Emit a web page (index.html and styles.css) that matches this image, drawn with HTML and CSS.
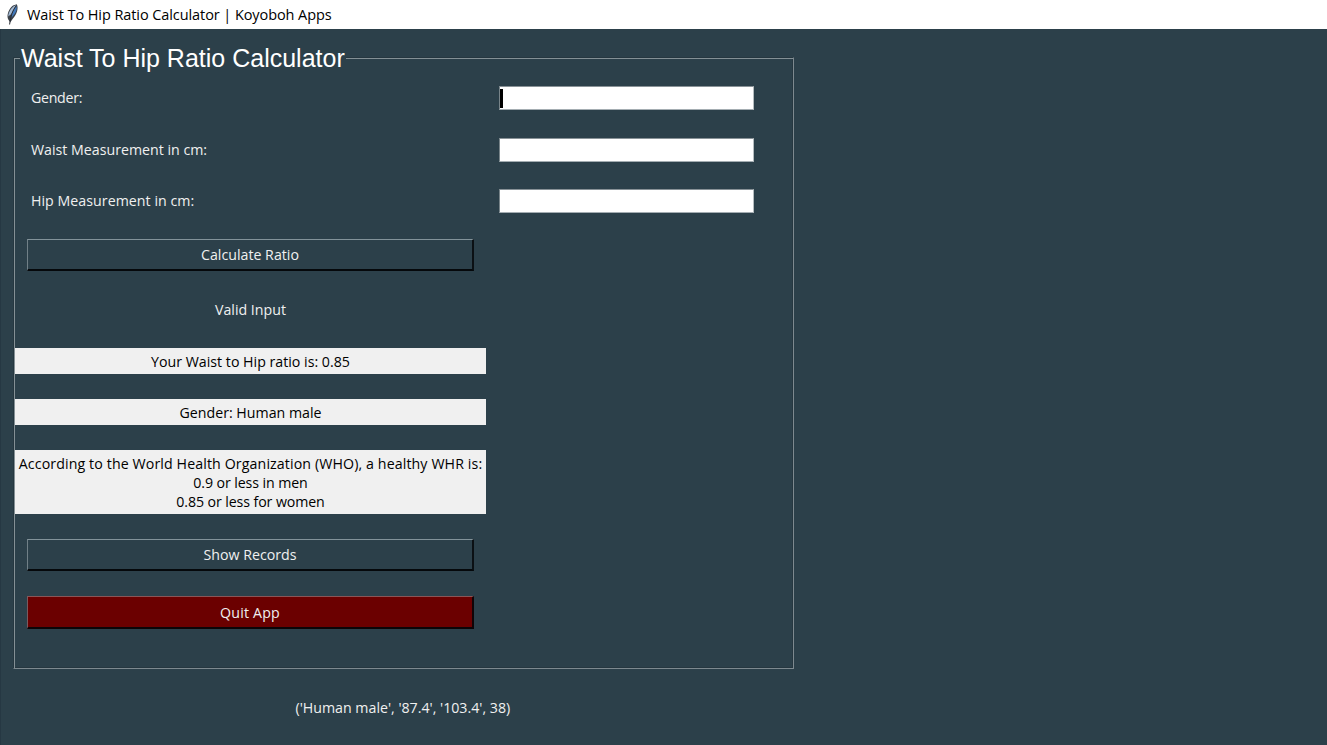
FILE: index.html
```html
<!DOCTYPE html>
<html lang="en">
<head>
<meta charset="utf-8">
<title>Waist To Hip Ratio Calculator | Koyoboh Apps</title>
<link rel="stylesheet" href="styles.css">
</head>
<body>
<header class="titlebar">
  <svg class="feather" width="14" height="22" viewBox="0 0 14 22">
    <path d="M11.8 1.2C13.6 4.5 12.4 11 7.6 16L5.2 19.6L3 16C1.4 12 4 5.5 8 2.6Z" fill="#3a4048"/>
    <path d="M11 2.3C7.5 3.2 3.6 8 3.2 13.4L6 11.2Z" fill="#a4bad4"/>
    <path d="M11.4 3C12.6 6.5 10.3 11.5 6 14.8L7.3 8.5Z" fill="#4178ba"/>
    <path d="M10.8 3.2C8 7 5.6 13 4.6 21.5" fill="none" stroke="#282c33" stroke-width="1"/>
  </svg>
  <span class="title">Waist To Hip Ratio Calculator | Koyoboh Apps</span>
</header>
<main class="window">
  <section class="panel">
    <h1 class="legend">Waist To Hip Ratio Calculator</h1>
    <form class="fields">
      <label class="label t-gender">Gender:</label>
      <div class="entry"><i class="caret"></i></div>
      <label class="label">Waist Measurement in cm:</label>
      <div class="entry"></div>
      <label class="label t-hip">Hip Measurement in cm:</label>
      <div class="entry"></div>
    </form>
    <div class="results">
      <button class="button" type="button">Calculate Ratio</button>
      <div class="status">Valid Input</div>
      <div class="output">Your Waist to Hip ratio is: 0.85</div>
      <div class="output">Gender: Human male</div>
      <div class="output info"><span class="t-who">According to the World Health Organization (WHO), a healthy WHR is:</span><span class="t-limit">0.9 or less in men</span><span class="t-limit">0.85 or less for women</span></div>
      <button class="button" type="button">Show Records</button>
      <button class="button quit" type="button">Quit App</button>
    </div>
  </section>
  <p class="record">('Human male', '87.4', '103.4', 38)</p>
</main>
</body>
</html>
```
FILE: styles.css
```css
* { box-sizing: border-box; }
body {
  margin: 0;
  height: 745px;
  overflow: hidden;
  background: #2c404a;
  color: #f0f0f0;
  font: 14.2px/19px "Open Sans", "Noto Sans", sans-serif;
  white-space: nowrap;
}
.titlebar {
  display: flex;
  align-items: center;
  height: 29px;
  padding-left: 5px;
  background: #fff;
  color: #000;
}
.feather { margin: -2px 8px 0 0; }
.title { font-size: 14.5px; letter-spacing: -0.08px; }
.window {
  display: flex;
  flex-direction: column;
  align-items: flex-start;
  height: 716px;
  padding: 28px 0 0 12px;
  border-left: 1px solid #263843;
}
.panel {
  width: 781px;
  height: 612px;
  padding-left: 1px;
  border: 1px solid;
  border-color: #263740 #7d898f #7d898f #263740;
  box-shadow: inset 1px 1px #849095, inset -1px -1px #263740;
}
.legend {
  width: 326px;
  height: 28px;
  margin: -14px 0 14px 5px;
  padding-left: 1px;
  background: #2c404a;
  color: #fff;
  font: 25px/28px "Liberation Sans", Arial, sans-serif;
}
.fields {
  display: grid;
  grid-template-columns: 468px 255px;
  grid-template-rows: repeat(3, 24px);
  row-gap: 27.5px;
  padding-left: 16px;
}
.label { line-height: 24.9px; }
.t-gender { letter-spacing: -0.3px; }
.t-hip { letter-spacing: 0.04px; }
.entry {
  padding: 2px 0 0;
  border: 1px solid;
  border-color: #899297 #b5bdc0 #a4adb2 #788489;
  background: #fff;
}
.caret { display: block; width: 3px; height: 19px; background: #000; }
.results {
  display: flex;
  flex-direction: column;
  width: 471px;
  padding-top: 26px;
  text-align: center;
}
.button {
  height: 32px;
  margin: 0 12px;
  padding: 0;
  border: solid;
  border-width: 1px 2px 2px 1px;
  border-color: #83939a #0b1014 #05080b #718087;
  background: transparent;
  color: #f0f0f0;
  font: inherit;
}
.status { height: 19px; margin: 29px 0; }
.output {
  height: 26px;
  margin-bottom: 25px;
  padding-top: 4px;
  background: #f0f0f0;
  color: #000;
}
.info { display: flex; flex-direction: column; align-items: center; height: 64px; }
.t-who { letter-spacing: 0.11px; }
.t-limit { letter-spacing: -0.1px; }
.quit {
  height: 33px;
  margin-top: 25px;
  border-color: #8a5557 #100407 #0b0508 #795b60;
  background: #6b0000;
  letter-spacing: 0.2px;
}
.record { margin: 29px 0 0 282.5px; }
```
